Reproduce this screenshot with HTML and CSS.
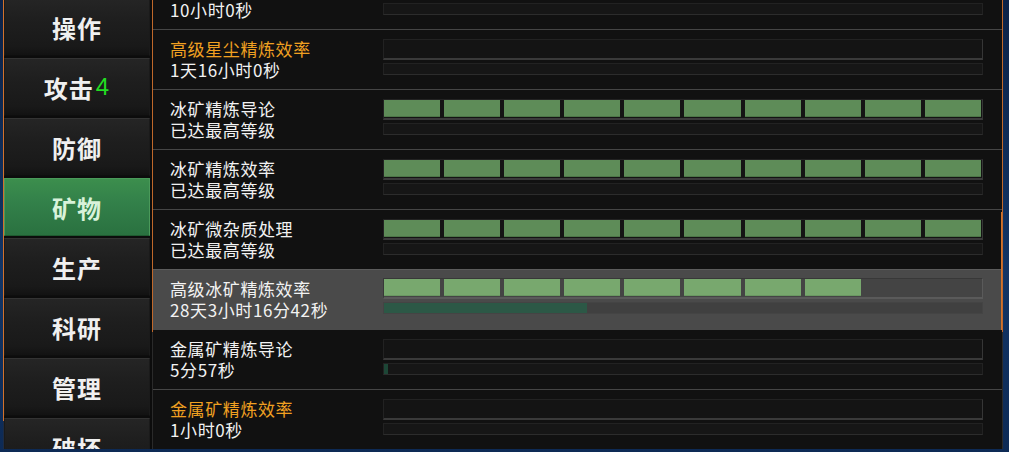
FILE: index.html
```html
<!DOCTYPE html>
<html lang="zh">
<head>
<meta charset="utf-8">
<link rel="stylesheet" href="styles.css">
</head>
<body>
<div class="app">
  <nav class="nav">
    <div class="tab">操作</div>
    <div class="tab">攻击<span class="count">4</span></div>
    <div class="tab">防御</div>
    <div class="tab active">矿物</div>
    <div class="tab">生产</div>
    <div class="tab">科研</div>
    <div class="tab">管理</div>
    <div class="tab">破坏</div>
  </nav>
  <main class="panel">
    <div class="list">
      <div class="row">
        <div class="info"><div class="title"></div><div class="sub">10小时0秒</div></div>
        <div class="bars"><div class="bar"></div><div class="prog"></div></div>
      </div>
      <div class="row">
        <div class="info"><div class="title orange">高级星尘精炼效率</div><div class="sub">1天16小时0秒</div></div>
        <div class="bars"><div class="bar"></div><div class="prog"></div></div>
      </div>
      <div class="row">
        <div class="info"><div class="title">冰矿精炼导论</div><div class="sub">已达最高等级</div></div>
        <div class="bars">
          <div class="bar"><i></i><i></i><i></i><i></i><i></i><i></i><i></i><i></i><i></i><i></i></div>
          <div class="prog"></div>
        </div>
      </div>
      <div class="row">
        <div class="info"><div class="title">冰矿精炼效率</div><div class="sub">已达最高等级</div></div>
        <div class="bars">
          <div class="bar"><i></i><i></i><i></i><i></i><i></i><i></i><i></i><i></i><i></i><i></i></div>
          <div class="prog"></div>
        </div>
      </div>
      <div class="row">
        <div class="info"><div class="title">冰矿微杂质处理</div><div class="sub">已达最高等级</div></div>
        <div class="bars">
          <div class="bar"><i></i><i></i><i></i><i></i><i></i><i></i><i></i><i></i><i></i><i></i></div>
          <div class="prog"></div>
        </div>
      </div>
      <div class="row current">
        <div class="info"><div class="title">高级冰矿精炼效率</div><div class="sub">28天3小时16分42秒</div></div>
        <div class="bars">
          <div class="bar"><i></i><i></i><i></i><i></i><i></i><i></i><i></i><i></i></div>
          <div class="prog"><div class="fill" style="width: 34%"></div></div>
        </div>
      </div>
      <div class="row">
        <div class="info"><div class="title">金属矿精炼导论</div><div class="sub">5分57秒</div></div>
        <div class="bars">
          <div class="bar"></div>
          <div class="prog"><div class="fill dim" style="width: 4px"></div></div>
        </div>
      </div>
      <div class="row">
        <div class="info"><div class="title orange">金属矿精炼效率</div><div class="sub">1小时0秒</div></div>
        <div class="bars"><div class="bar"></div><div class="prog"></div></div>
      </div>
    </div>
  </main>
</div>
</body>
</html>
```

FILE: styles.css
```css
* { box-sizing: border-box; }

html, body {
  margin: 0;
  height: 452px;
  overflow: hidden;
}

body {
  font-family: "Noto Sans CJK SC", "Noto Sans", sans-serif;
  color: #f2f2f2;
  background:
    linear-gradient(to right, transparent 935px, #8fb7c2 935px, #6f9aa8 1001px, transparent 1001px) top / 100% 3px no-repeat,
    linear-gradient(to bottom, #0c2247, #123566 60%, #0d2a55);
}

.app {
  display: flex;
  height: 449px;
  padding-left: 3px;
}

/* ---------- left navigation ---------- */
.nav {
  width: 149px;
  flex: none;
  display: flex;
  flex-direction: column;
  gap: 2px;
  padding-right: 2px;
  margin-top: -2px;
  background: #0c0c0c;
  border-left: 1px solid;
  border-image: linear-gradient(to bottom, #d2722c 0, #d2722c 422px, #1d2c44 422px) 1;
  overflow: hidden;
}

.tab {
  flex: none;
  height: 58px;
  display: flex;
  align-items: center;
  justify-content: center;
  font-size: 24px;
  font-weight: 700;
  letter-spacing: 1px;
  color: #f0f0f0;
  background: linear-gradient(to bottom, #252525 0, #1e1e1e 40%, #191919 85%, #121212 100%);
  border: 1px solid #1a1a1a;
  border-top-color: #333;
  border-bottom-color: #0e0e0e;
}

.tab .count {
  color: #22dd22;
  font-family: "Liberation Sans", sans-serif;
  font-weight: 400;
  margin-left: 2px;
}

.tab.active {
  color: #d8f2da;
  background: linear-gradient(to bottom, #3c8e4d 0, #33814a 40%, #2a7140 100%);
  border: 1px solid #4a9a5a;
  border-bottom-color: #1f5a30;
}

/* ---------- main panel ---------- */
.panel {
  width: 851px;
  flex: none;
  background: #111;
  border-left: 1px solid;
  border-image: linear-gradient(to bottom, #c0682a 0, #c0682a 332px, #2a2a2a 332px) 1;
  border-right: 1px solid #2f4058;
  position: relative;
  overflow: hidden;
}

.panel::after {
  content: "";
  position: absolute;
  right: 0;
  top: 212px;
  width: 1px;
  height: 118px;
  background: #d2722c;
}

.list {
  margin-top: -30px;
}

.row {
  height: 60px;
  display: grid;
  grid-template-columns: 213px 600px;
  gap: 0;
  padding-left: 17px;
  border-bottom: 1px solid #454545;
}

.row.current {
  background: #4a4a4a;
  border-top: 1px solid #5c5c5c;
  margin-top: -1px;
  height: 61px;
  border-bottom-color: #4a4a4a;
}

.info {
  padding-top: 8px;
  font-size: 17px;
  line-height: 21px;
  letter-spacing: 0.6px;
  white-space: nowrap;
}

.title { height: 21px; }

.title.orange { color: #f0a021; }

.bars {
  padding-top: 9px;
}

.current .bars { padding-top: 8px; }

.bar {
  height: 21px;
  background: #141414;
  border: 1px solid #222;
  border-right-color: #363636;
  border-bottom: 2px solid #3a3a3a;
  padding: 0 1px 1px 0;
  display: grid;
  grid-template-columns: repeat(10, 1fr);
  column-gap: 4px;
}

.bar i {
  display: block;
  background: #5e8c58;
  box-shadow: inset 0 -1px 0 #4d7648;
}

.prog {
  height: 12px;
  margin-top: 3px;
  background: #161616;
  border: 1px solid #222;
  border-bottom-color: #2c2c2c;
}

.fill {
  height: 100%;
  background: #2c5846;
}

.fill.dim { background: #1d4636; }

.current .bar {
  background: #444;
  border-color: #383838;
  border-bottom-color: #5a5a5a;
  border-right-color: #5a5a5a;
}

.current .bar i {
  background: #78a86e;
  box-shadow: inset 0 -1px 0 #6a9862;
}

.current .prog {
  background: #404040;
  border-color: #444;
}
```
